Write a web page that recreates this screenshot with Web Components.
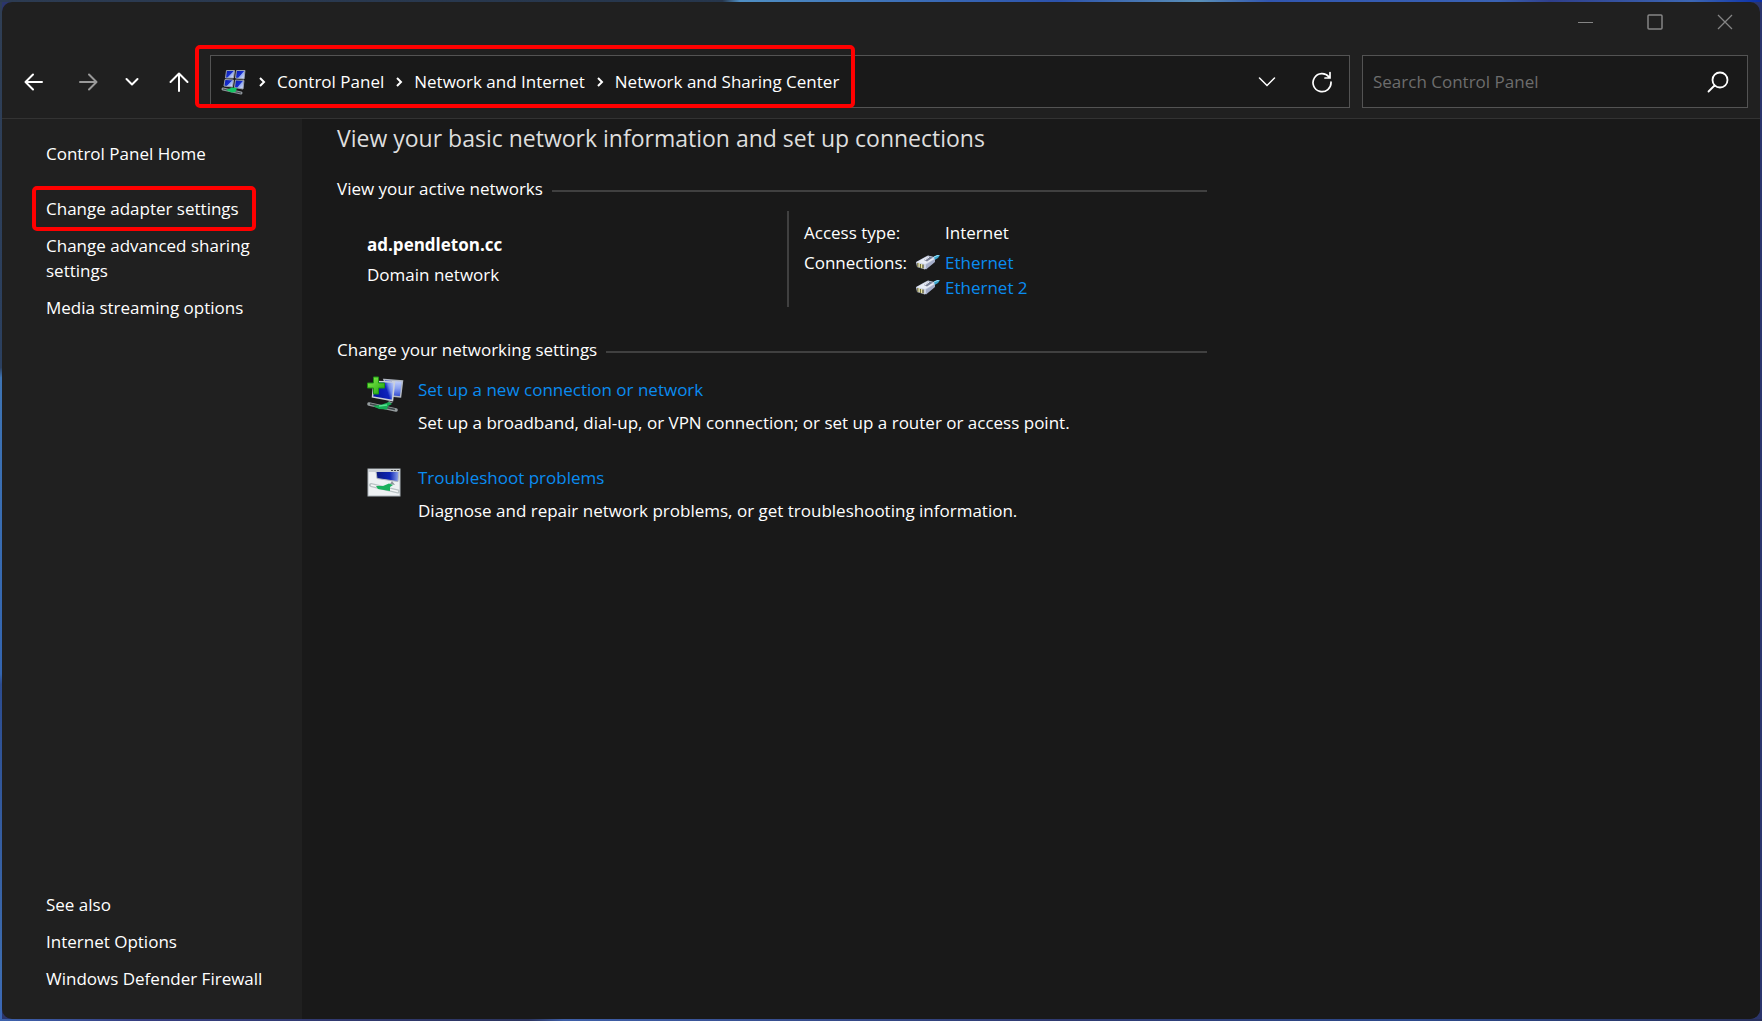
<!DOCTYPE html>
<html lang="en">
<head>
<meta charset="utf-8">
<title>Network and Sharing Center</title>
<style>
  html, body { height: 100%; margin: 0; }
  body {
    font-family: "Open Sans", "Noto Sans", sans-serif;
    font-size: 17px;
    line-height: 25px;
    color: #fff;
    background: #0a1a3c;
  }
</style>
</head>
<body>
<control-panel-window>
  <title-bar slot="title"></title-bar>
  <nav-bar slot="nav"></nav-bar>
  <side-bar slot="side">
    <side-link slot="home">Control Panel Home</side-link>
    <side-link highlighted>Change adapter settings</side-link>
    <side-link>Change advanced sharing settings</side-link>
    <side-link>Media streaming options</side-link>
    <span slot="also">See also</span>
    <side-link slot="also">Internet Options</side-link>
    <side-link slot="also">Windows Defender Firewall</side-link>
  </side-bar>
  <network-page>
    <span slot="heading">View your basic network information and set up connections</span>
    <page-section label="View your active networks">
      <active-network name="ad.pendleton.cc" kind="Domain network" access="Internet" connections="Ethernet,Ethernet 2"></active-network>
    </page-section>
    <page-section label="Change your networking settings">
      <task-item icon="setup" label="Set up a new connection or network">Set up a broadband, dial-up, or VPN connection; or set up a router or access point.</task-item>
      <task-item icon="troubleshoot" label="Troubleshoot problems">Diagnose and repair network problems, or get troubleshooting information.</task-item>
    </page-section>
  </network-page>
</control-panel-window>

<script>
const icons = {
  network: `<svg width="26" height="26" viewBox="0 0 26 26" aria-hidden="true">
    <defs><linearGradient id="s" x1="0" y1="0" x2="1" y2="0.8"><stop offset="0" stop-color="#0616a8"/><stop offset=".55" stop-color="#1830d0"/><stop offset=".62" stop-color="#8fa6f0"/><stop offset="1" stop-color="#dbe4fc"/></linearGradient></defs>
    <g stroke="#9aa1ae" stroke-width="1">
      <path d="M5.500 1.500h8l-1 7.500H4.500z" fill="url(#s)"/>
      <path d="M15.500 1.500h8.500l-1 8.500-8.500-1z" fill="url(#s)"/>
      <path d="M4 10.500l8.500.5-1 7-8.500-1z" fill="url(#s)"/>
      <path d="M14.500 11l8.500.5-1 8.500-8.500-1.500z" fill="url(#s)"/>
    </g>
    <path d="M2 20l18 4" stroke="#8f959b" stroke-width="3" stroke-linecap="round"/>
    <path d="M2 20l18 4" stroke="#434a50" stroke-width="1"/>
    <path d="M5 21l6-2.500 5 .5-1.500 4-4 .500z" fill="#16c464"/>
  </svg>`,
  setup: `<svg width="37" height="37" viewBox="0 0 37 37" aria-hidden="true">
    <defs>
      <linearGradient id="s" x1="0" y1=".3" x2="1" y2="0"><stop offset="0" stop-color="#0414a0"/><stop offset=".55" stop-color="#0e24bc"/><stop offset=".7" stop-color="#6f8aea"/><stop offset="1" stop-color="#d3defd"/></linearGradient>
      <linearGradient id="r" x1="0" y1="0" x2="0" y2="1"><stop offset="0" stop-color="#cfdafc"/><stop offset=".5" stop-color="#8ba2f2"/><stop offset="1" stop-color="#2c44cc"/></linearGradient>
      <linearGradient id="p" x1="0" y1="0" x2="1" y2="1"><stop offset="0" stop-color="#8cf04c"/><stop offset="1" stop-color="#18a010"/></linearGradient>
    </defs>
    <path d="M17 3.500l18.500 1.500-2 16-9-1z" fill="url(#r)" stroke="#b3b9c4" stroke-width="1.500"/>
    <path d="M18 4.500l7 .5v2h-7z" fill="#0c20b4"/>
    <path d="M7 5.500l20.500.5-2 18.500-20-3.500z" fill="url(#s)" stroke="#ccd1d9" stroke-width="1.500"/>
    <path d="M22 25l-3 4 7-2.500z" fill="#8b9094"/>
    <path d="M2 28l27 6" stroke="#959c9e" stroke-width="3.500" stroke-linecap="round"/>
    <path d="M3 28l25 5.500" stroke="#3e4749" stroke-width="1.500"/>
    <path d="M6 30l9-1.500 7-2.500 3 2-4 2-1 3.500-8-.5z" fill="#17ad55"/>
    <path d="M12 30l8-1" stroke="#58e392" stroke-width="1.500"/>
    <path d="M6.500 1h5v6h6v5h-6v6h-5v-6h-6V7h6z" fill="url(#p)" stroke="#1d9414"/>
  </svg>`,
  troubleshoot: `<svg width="35" height="29" viewBox="0 0 35 29" aria-hidden="true">
    <defs><linearGradient id="s" x1="0" y1="0" x2="1" y2="0"><stop offset="0" stop-color="#0a1a80"/><stop offset=".6" stop-color="#0c24b4"/><stop offset="1" stop-color="#93a8ec"/></linearGradient></defs>
    <rect x="1" y="1" width="32" height="27" fill="#eef1f3" stroke="#aeb6bc"/>
    <path d="M9 3.500h23l-1 10-21-3z" fill="url(#s)" stroke="#b3bac2"/>
    <path d="M1 2h32v2H1z" fill="#c8ced3"/>
    <path d="M24 2h2v1h-2zM27 2h2v1h-2zM30 2h2v1h-2z" fill="#444"/>
    <path d="M25 13l-2 3 5 1z" fill="#8d949b"/>
    <path d="M4 17l27 6.500" stroke="#bac3c5" stroke-width="4" stroke-linecap="round"/>
    <path d="M4 17l27 6.500" stroke="#f5f7f8" stroke-width="1.500"/>
    <path d="M9 18l7 0 6-2.500 4 1.500-3 2v4l-12-2z" fill="#18b05c"/>
  </svg>`,
  ethernet: `<svg width="25" height="16" viewBox="0 0 25 16" aria-hidden="true">
    <path d="M17 2l4-2h3l-2 3-5 3z" fill="#3aa6cf"/>
    <path d="M18 2l5-2" stroke="#9fe0f5"/>
    <path d="M0 7l9-5 3-1.500 6 1.500 1 4-10 8.500-8-2.500z" fill="#ccd3e6"/>
    <path d="M1 7l10-5 7 2-9 5z" fill="#e9edf7"/>
    <path d="M8 5l5-3.500 4 1-6 4z" fill="#777e95"/>
    <path d="M9 5l4-3" stroke="#f6f8fd"/>
    <path d="M10 9.500v5l9-7.500V4z" fill="#a4adc8"/>
    <path d="M2 8v4M4.500 9v4M7 9.500v4" stroke="#6d6a3c" stroke-width="1.500"/>
    <path d="M3 8v4M5.500 9v4" stroke="#eee9a0"/>
  </svg>`,
  back: `<svg width="20" height="20" viewBox="0 0 20 20" fill="none" stroke="currentColor" stroke-width="2" stroke-linecap="round" stroke-linejoin="round" aria-hidden="true"><path d="M18 10H2M9 2.500L1.500 10 9 17.500"/></svg>`,
  forward: `<svg width="20" height="20" viewBox="0 0 20 20" fill="none" stroke="currentColor" stroke-width="2" stroke-linecap="round" stroke-linejoin="round" aria-hidden="true"><path d="M2 10h16M11 2.500l7.500 7.500-7.500 7.500"/></svg>`,
  recent: `<svg width="14" height="10" viewBox="0 0 14 10" fill="none" stroke="currentColor" stroke-width="2" stroke-linecap="round" stroke-linejoin="round" aria-hidden="true"><path d="M1.500 2L7 7.500 12.500 2"/></svg>`,
  up: `<svg width="20" height="20" viewBox="0 0 20 20" fill="none" stroke="currentColor" stroke-width="2" stroke-linecap="round" stroke-linejoin="round" aria-hidden="true"><path d="M10 19V1.500M1.500 10L10 1.500l8.500 8.500"/></svg>`,
  chevron: `<svg width="8" height="12" viewBox="0 0 8 12" fill="none" stroke="currentColor" stroke-width="2" aria-hidden="true"><path d="M2 2l4 4-4 4"/></svg>`,
  dropdown: `<svg width="18" height="12" viewBox="0 0 18 12" fill="none" stroke="currentColor" stroke-width="1.500" stroke-linecap="round" aria-hidden="true"><path d="M1.500 2L9 9.500 16.500 2"/></svg>`,
  refresh: `<svg width="22" height="22" viewBox="0 0 22 22" fill="none" stroke="currentColor" stroke-width="1.700" stroke-linecap="round" aria-hidden="true"><path d="M18 6A9 9 0 1 0 20 11M19 1.500V7h-5"/></svg>`,
  search: `<svg width="22" height="22" viewBox="0 0 22 22" fill="none" stroke="currentColor" stroke-width="1.800" stroke-linecap="round" aria-hidden="true"><circle cx="13" cy="9" r="7.500"/><path d="M7.500 14.500L1.500 20.500"/></svg>`,
  minimize: `<svg width="16" height="16" viewBox="0 0 16 16" fill="none" stroke="currentColor" aria-hidden="true"><path d="M1 8.500h15"/></svg>`,
  maximize: `<svg width="16" height="16" viewBox="0 0 16 16" fill="none" stroke="currentColor" stroke-width="1.500" aria-hidden="true"><rect x="1" y="1" width="14" height="14" rx="1"/></svg>`,
  close: `<svg width="16" height="16" viewBox="0 0 16 16" fill="none" stroke="currentColor" stroke-width="1.300" aria-hidden="true"><path d="M1 1l14 14M15 1L1 15"/></svg>`
};

const base = `
  *, *::before, *::after { box-sizing: border-box; }
  button { display: flex; align-items: center; justify-content: center; padding: 0; border: 0; background: none; color: inherit; font: inherit; }
  a { color: inherit; text-decoration: none; }
  svg { display: block; flex: none; }
`;

class PanelElement extends HTMLElement {
  constructor() {
    super();
    this.attachShadow({ mode: "open" });
  }

  connectedCallback() {
    this.shadowRoot.innerHTML = `<style>${base}${this.styles()}</style>${this.markup()}`;
  }
}

class ControlPanelWindow extends PanelElement {
  // the host's 2px padding lets the desktop show around the window
  styles() {
    return `
      :host {
        display: block; min-height: 100vh; padding: 2px; box-sizing: border-box;
        background:
          linear-gradient(90deg, #2c3b52, #26364c 41%, #4f8fc4 42%, #2c52ac 60%, #5a90b8 68%, #3156b0 72%, #3a62b4 85%, #2f3f8c 88%, #3c66b4 96%, #0a2fa8) top / 100% 2px no-repeat,
          linear-gradient(90deg, #3d62ad, #363e80 8%, #2c3560 30%, #3e5fa8 32%, #2f3a70 60%, #2d4a8c 80%, #28305c) bottom / 100% 2px no-repeat,
          linear-gradient(#2f3e54, #2b4060 36%, #3e74b4 37%, #3465b0 66%, #2c4c90 67%, #3d6caf 95%, #3a66b8) left / 2px 100% no-repeat,
          #2b356c;
      }
      .window { display: flex; flex-direction: column; min-height: calc(100vh - 4px); border-radius: 10px; overflow: hidden; background: #202020; }
      .body { display: flex; flex: 1; border-top: 1px solid #333; }
      main { flex: 1; min-width: 0; background: #191919; }
    `;
  }

  markup() {
    return `
      <div class="window">
        <slot name="title"></slot>
        <slot name="nav"></slot>
        <div class="body">
          <slot name="side"></slot>
          <main><slot></slot></main>
        </div>
      </div>
    `;
  }
}

class TitleBar extends PanelElement {
  styles() {
    return `
      :host { display: flex; justify-content: flex-end; height: 40px; color: #858585; }
      button { width: 70px; height: 40px; }
    `;
  }

  markup() {
    return `
      <button type="button" aria-label="Minimize">${icons.minimize}</button>
      <button type="button" aria-label="Maximize">${icons.maximize}</button>
      <button type="button" aria-label="Close">${icons.close}</button>
    `;
  }
}

class NavBar extends PanelElement {
  styles() {
    return `
      :host { display: flex; gap: 12px; padding: 13px 12px 10px 8px; }
      .history { display: flex; align-items: center; width: 188px; }
      .history button { height: 46px; }
      .back { width: 48px; }
      .forward { width: 60px; }
      .recent { width: 28px; }
      .up { width: 38px; margin-left: auto; }
      .history button:disabled { color: #999; }
      .address { display: flex; align-items: center; flex: 1; height: 53px; border: 1px solid #535353; background: #191919; }
      nav { display: flex; align-items: center; flex: 1; height: 100%; padding-left: 10px; }
      .trail { position: relative; display: flex; align-items: center; height: 100%; white-space: nowrap; }
      .trail::after { content: ""; position: absolute; inset: -11px -16px -1px -26px; border: 4px solid #f00; border-radius: 5px; pointer-events: none; }
      ol { display: flex; align-items: center; margin: 0; padding: 0; list-style: none; }
      li { display: flex; align-items: center; }
      li svg { margin: 0 11px; }
      .address button { width: 55px; height: 51px; }
      .search { display: flex; align-items: center; width: 386px; height: 53px; border: 1px solid #535353; background: #191919; }
      input { flex: 1; min-width: 0; padding: 0 0 0 10px; border: 0; outline: 0; background: none; color: #fff; font: inherit; }
      input::placeholder { color: #6d6d6d; opacity: 1; }
      .search button { width: 58px; height: 51px; }
    `;
  }

  markup() {
    const crumbs = ["Control Panel", "Network and Internet", "Network and Sharing Center"];
    return `
      <div class="history">
        <button type="button" class="back" aria-label="Back">${icons.back}</button>
        <button type="button" class="forward" aria-label="Forward" disabled>${icons.forward}</button>
        <button type="button" class="recent" aria-label="Recent locations">${icons.recent}</button>
        <button type="button" class="up" aria-label="Up">${icons.up}</button>
      </div>
      <div class="address">
        <nav aria-label="Address">
          <div class="trail">${icons.network}<ol>${crumbs.map((c) => `<li>${icons.chevron}<a href="#">${c}</a></li>`).join("")}</ol></div>
        </nav>
        <button type="button" aria-label="Previous locations">${icons.dropdown}</button>
        <button type="button" aria-label="Refresh">${icons.refresh}</button>
      </div>
      <form class="search" role="search">
        <input type="search" aria-label="Search Control Panel" placeholder="Search Control Panel">
        <button type="submit" aria-label="Search">${icons.search}</button>
      </form>
    `;
  }
}

class SideBar extends PanelElement {
  styles() {
    return `
      :host { display: flex; flex-direction: column; justify-content: space-between; width: 300px; padding: 22px 36px 28px 44px; box-sizing: border-box; }
      .group { display: flex; flex-direction: column; align-items: flex-start; gap: 12px; }
      .home { margin-bottom: 18px; }
    `;
  }

  markup() {
    return `
      <div class="group">
        <div class="home"><slot name="home"></slot></div>
        <slot></slot>
      </div>
      <div class="group"><slot name="also"></slot></div>
    `;
  }
}

class SideLink extends PanelElement {
  styles() {
    return `
      :host { display: block; position: relative; }
      :host([highlighted])::after { content: ""; position: absolute; inset: -10px -17px -10px -14px; border: 4px solid #f00; border-radius: 5px; pointer-events: none; }
    `;
  }

  markup() {
    return `<a href="#"><slot></slot></a>`;
  }
}

class NetworkPage extends PanelElement {
  styles() {
    return `
      :host { display: block; max-width: 870px; padding: 3px 35px 35px; }
      h1 { margin: 0 0 22px; font-size: 23px; font-weight: 400; line-height: 32px; color: #dedede; }
    `;
  }

  markup() {
    return `<h1><slot name="heading"></slot></h1><slot></slot>`;
  }
}

class PageSection extends PanelElement {
  styles() {
    return `
      :host { display: block; }
      h2 { display: flex; align-items: center; gap: 9px; margin: 0; font-size: inherit; font-weight: 400; }
      h2::after { content: ""; flex: 1; height: 2px; margin-top: 4px; background: #404040; }
    `;
  }

  markup() {
    return `<section><h2>${this.getAttribute("label")}</h2><slot></slot></section>`;
  }
}

class ActiveNetwork extends PanelElement {
  styles() {
    return `
      :host { display: grid; grid-template-columns: 420px 1fr; padding: 10px 0 30px 30px; }
      .name { display: flex; flex-direction: column; gap: 5px; padding-top: 21px; }
      dl { display: grid; grid-template-columns: 112px 1fr; align-content: start; row-gap: 5px; margin: 0; padding: 9px 0 7px 15px; border-left: 2px solid #404040; }
      dd { margin: 0; }
      dd.plain { padding-left: 29px; }
      dd a { display: flex; align-items: center; gap: 4px; color: #0a8cf0; }
    `;
  }

  markup() {
    const links = this.getAttribute("connections").split(",");
    return `
      <div class="name"><strong>${this.getAttribute("name")}</strong><span>${this.getAttribute("kind")}</span></div>
      <dl>
        <dt>Access type:</dt><dd class="plain">${this.getAttribute("access")}</dd>
        <dt>Connections:</dt><dd>${links.map((l) => `<a href="#">${icons.ethernet}${l}</a>`).join("")}</dd>
      </dl>
    `;
  }
}

class TaskItem extends PanelElement {
  styles() {
    return `
      :host { display: flex; gap: 14px; padding: 15px 0 15px 30px; }
      .icon { display: flex; align-items: center; width: 37px; height: 35px; }
      .text { display: flex; flex-direction: column; gap: 8px; }
      a { align-self: flex-start; color: #0a8cf0; }
    `;
  }

  markup() {
    return `
      <div class="icon">${icons[this.getAttribute("icon")]}</div>
      <div class="text"><a href="#">${this.getAttribute("label")}</a><span><slot></slot></span></div>
    `;
  }
}

customElements.define("control-panel-window", ControlPanelWindow);
customElements.define("title-bar", TitleBar);
customElements.define("nav-bar", NavBar);
customElements.define("side-bar", SideBar);
customElements.define("side-link", SideLink);
customElements.define("network-page", NetworkPage);
customElements.define("page-section", PageSection);
customElements.define("active-network", ActiveNetwork);
customElements.define("task-item", TaskItem);
</script>
</body>
</html>
